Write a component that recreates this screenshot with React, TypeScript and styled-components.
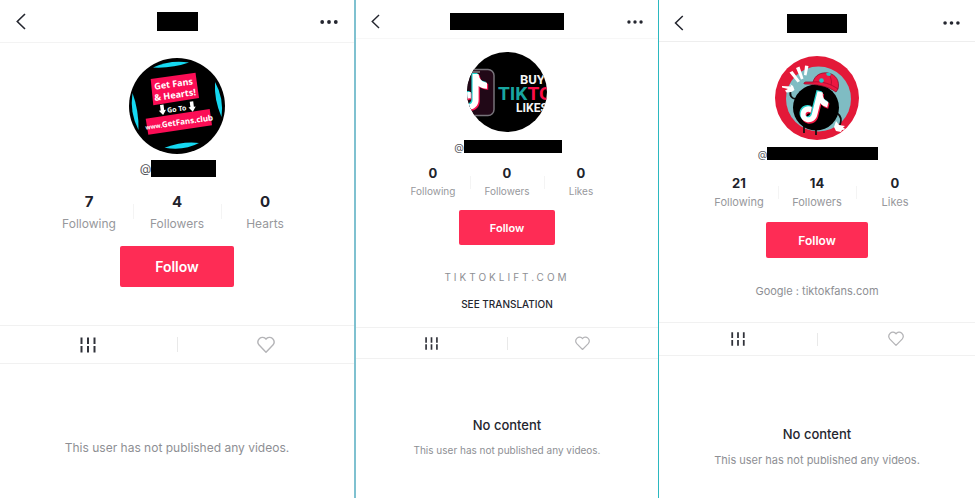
import React from 'react';
import styled, { createGlobalStyle, ThemeProvider } from 'styled-components';

const GlobalStyle = createGlobalStyle`
  *, *::before, *::after { box-sizing: border-box; }
  body { margin: 0; background: #fff; font-family: Inter, "Liberation Sans", sans-serif; }
  button { font: inherit; border: 0; padding: 0; background: none; cursor: pointer; }
  h1, h2, p, dl, dd, dt { margin: 0; font-weight: inherit; }
  svg { display: block; }
`;

const scales = {
  large: {
    bar: 43, barTop: 1, barPad: 16, titleW: 41, titleH: 19, chevron: 17, dots: 18,
    avatar: 96, avatarTop: 15, handleTop: 6, handleH: 17, handleW: 65, handleFont: 12,
    statsTop: 15, statW: 88, num: 15, numLine: 20, label: 12, labelLine: 16, labelTop: 4, rule: 15,
    buttonTop: 14, buttonW: 114, buttonH: 41, buttonFont: 14,
    bioTop: 0, tabsTop: 38, tabsH: 39, icon: 18, emptyTop: 76, title: 13, message: 12, messageTop: 0, barLine: '#f3f3f3',
  },
  small: {
    bar: 39, barTop: 5, barPad: 15, titleW: 114, titleH: 17, chevron: 15, dots: 16,
    avatar: 80, avatarTop: 13, handleTop: 8, handleH: 13, handleW: 98, handleFont: 10,
    statsTop: 11, statW: 74, num: 13, numLine: 18, label: 10, labelLine: 14, labelTop: 2, rule: 13,
    buttonTop: 12, buttonW: 96, buttonH: 35, buttonFont: 11,
    bioTop: 24, tabsTop: 15, tabsH: 32, icon: 15, emptyTop: 57, title: 13, message: 10, messageTop: 9, barLine: '#f7f7f7',
  },
  medium: {
    bar: 42, barTop: 5, barPad: 15, titleW: 60, titleH: 19, chevron: 16, dots: 17,
    avatar: 84, avatarTop: 14, handleTop: 7, handleH: 13, handleW: 111, handleFont: 10,
    statsTop: 14, statW: 78, num: 13, numLine: 18, label: 11, labelLine: 14, labelTop: 3, rule: 13,
    buttonTop: 13, buttonW: 102, buttonH: 36, buttonFont: 12,
    bioTop: 25, tabsTop: 23, tabsH: 34, icon: 16, emptyTop: 69, title: 13, message: 11, messageTop: 10, barLine: '#eeeeee',
  },
};

const Board = styled.main`
  display: grid;
  grid-template-columns: minmax(0, 356fr) minmax(0, 303fr) minmax(0, 316fr);
  min-height: 100vh;
`;

const Panel = styled.section<{ $edge?: string }>`
  border-right: ${p => p.$edge || '0'};
  background: #fff;
`;

const TopBar = styled.header`
  display: grid;
  grid-template-columns: 1fr auto 1fr;
  align-items: center;
  height: ${p => p.theme.bar}px;
  padding: ${p => p.theme.barTop}px ${p => p.theme.barPad}px 0;
  border-bottom: 1px solid ${p => p.theme.barLine};
`;

const BarButton = styled.button<{ $end?: boolean }>`
  justify-self: ${p => (p.$end ? 'end' : 'start')};
  color: #24262f;
`;

const NameMask = styled.h1`
  width: ${p => p.theme.titleW}px;
  height: ${p => p.theme.titleH}px;
  background: #000;
`;

const Profile = styled.div`
  display: flex;
  flex-direction: column;
  align-items: center;
  padding: ${p => p.theme.avatarTop}px 0 ${p => p.theme.tabsTop}px;
`;

const Avatar = styled.svg`
  width: ${p => p.theme.avatar}px;
  height: ${p => p.theme.avatar}px;
  border-radius: 50%;
`;

const Handle = styled.p`
  display: flex;
  align-items: center;
  height: ${p => p.theme.handleH}px;
  margin-top: ${p => p.theme.handleTop}px;
  padding-left: 2px;
  font-size: ${p => p.theme.handleFont}px;
  color: #55565c;
`;

const HandleMask = styled.span`
  width: ${p => p.theme.handleW}px;
  height: 100%;
  background: #000;
`;

const Stats = styled.dl`
  display: flex;
  margin-top: ${p => p.theme.statsTop}px;
`;

const Stat = styled.div`
  position: relative;
  display: flex;
  flex-direction: column-reverse;
  gap: ${p => p.theme.labelTop}px;
  width: ${p => p.theme.statW}px;
  text-align: center;

  & + &::before {
    content: '';
    position: absolute;
    left: 0;
    top: 12px;
    width: 1px;
    height: ${p => p.theme.rule}px;
    background: #f4f4f4;
  }
`;

const StatLabel = styled.dt`
  font-size: ${p => p.theme.label}px;
  line-height: ${p => p.theme.labelLine}px;
  color: #97989c;
`;

const StatValue = styled.dd`
  font-size: ${p => p.theme.num}px;
  line-height: ${p => p.theme.numLine}px;
  font-weight: 700;
  color: #20222b;
`;

const FollowButton = styled.button`
  && {
    width: ${p => p.theme.buttonW}px;
    height: ${p => p.theme.buttonH}px;
    margin-top: ${p => p.theme.buttonTop}px;
    border-radius: 2px;
    background: #fe2c55;
    color: #fff;
    font-size: ${p => p.theme.buttonFont}px;
    font-weight: 600;
  }
`;

const Bio = styled.p<{ $spaced?: boolean }>`
  margin-top: ${p => p.theme.bioTop}px;
  font-size: ${p => p.theme.label}px;
  line-height: 16px;
  letter-spacing: ${p => (p.$spaced ? '3px' : 'normal')};
  color: #8e8f94;
`;

const TranslateButton = styled.button`
  && {
    margin-top: 11px;
    font-size: 10px;
    font-weight: 500;
    line-height: 16px;
    color: #24262f;
  }
`;

const Tabs = styled.nav`
  display: grid;
  grid-template-columns: 1fr 1px 1fr;
  align-items: center;
  height: ${p => p.theme.tabsH}px;
  border: solid #f1f1f1;
  border-width: 1px 0;
`;

const Tab = styled.button<{ $active?: boolean }>`
  display: grid;
  place-items: center;
  height: 100%;
  color: ${p => (p.$active ? '#30323a' : '#b4b4b7')};
`;

const TabRule = styled.span`
  height: ${p => p.theme.rule}px;
  background: #e9e9e9;
`;

const Empty = styled.div`
  padding-top: ${p => p.theme.emptyTop}px;
  text-align: center;
`;

const EmptyTitle = styled.h2`
  font-size: ${p => p.theme.title}px;
  font-weight: 500;
  line-height: 18px;
  color: #24262f;
`;

const EmptyText = styled.p`
  margin-top: ${p => p.theme.messageTop}px;
  font-size: ${p => p.theme.message}px;
  line-height: ${p => p.theme.labelLine}px;
  color: #8e8f94;
`;

const BackIcon = ({ size }: { size: number }) => (
  <svg width={Math.round(size * 0.6)} height={size} viewBox="0 0 10 17" fill="none" stroke="currentColor" strokeWidth="1.6">
    <path d="M9 1 1.3 8.5 9 16" />
  </svg>
);

const MoreIcon = ({ size }: { size: number }) => (
  <svg width={size} height="6" viewBox="0 0 18 6" fill="currentColor">
    <circle cx="2.2" cy="3" r="1.9" />
    <circle cx="9" cy="3" r="1.9" />
    <circle cx="15.8" cy="3" r="1.9" />
  </svg>
);

const GridIcon = ({ size }: { size: number }) => (
  <svg width={size} height={size} viewBox="0 0 18 18" stroke="currentColor" strokeWidth="2">
    <path d="M2.500 1.500v6.500M9 1.500v6.500M15.500 1.500v6.500M2.500 10v6.500M9 10v6.500M15.500 10v6.500" />
  </svg>
);

const HeartIcon = ({ size }: { size: number }) => (
  <svg width={size} height={size} viewBox="0 0 18 18" fill="none" stroke="currentColor" strokeWidth="1.4" strokeLinejoin="round">
    <path d="M9 3.2C7.500 1 4.400.8 2.500 2.600.6 4.400.5 7.100 2.100 9.100L9 16.200l6.900-7.100c1.600-2 1.500-4.700-.4-6.500C13.600.8 10.500 1 9 3.200Z" />
  </svg>
);

const notePath = 'M8 0h5c.4 4.200 2.600 6.800 7 7.200v5c-2.800 0-5-.9-7-2.300v11.500c0 9-11.500 11-14.500 4-2.300-6 2-11 8-10.400v5.300c-3-.7-4.800 1.300-3.700 3.600 1.400 2.500 5.200 1.300 5.200-2.500Z';

const FansAvatar = () => (
  <Avatar viewBox="0 0 96 96" role="img" aria-label="Get Fans">
    <rect width="96" height="96" fill="#000" />
    <g fill="#16d9f2">
      <path d="M24 9.500Q41 1.500 60 4.500 43 10.500 24 9.500Z" />
      <path d="M35.500 89.700Q54 83 70 85 55 93 35.500 89.700Z" />
      <path d="M3.500 35Q10 53 9.500 72 .5 55 3.500 35Z" />
      <path d="M86 24Q95 40 92.500 59 85 42 86 24Z" />
    </g>
    <g fill="#fb0d55">
      <path d="M21.700 21 66.500 14.700 70 40 24.300 47.200Z" />
      <path d="M16.700 60.700 80.700 51 83 67.300 19.300 76.700Z" />
    </g>
    <g fill="#fff" fontFamily='"Noto Sans", sans-serif' fontWeight="700" textAnchor="middle">
      <text fontSize="9" transform="translate(45 29) rotate(-8)">Get Fans</text>
      <text fontSize="9" transform="translate(46.500 40) rotate(-8)">&amp; Hearts!</text>
      <text fontSize="7" transform="translate(48 53.500) rotate(-8)">Go To</text>
      <text fontSize="8" transform="translate(50.500 67) rotate(-8)"><tspan fontSize="6">www.</tspan>GetFans.club</text>
    </g>
    <g fill="#fff">
      <path d="m31 47 3.500-.5.700 5.500 1.800-.3-2.900 5.300-4.300-4.300 1.900-.3Z" />
      <path d="m60.700 43.700 3.500-.5.700 5.500 1.800-.3-2.900 5.300-4.300-4.300 1.900-.3Z" />
    </g>
  </Avatar>
);

const LiftAvatar = () => (
  <Avatar viewBox="0 0 80 80" role="img" aria-label="Buy TikTok Likes">
    <rect width="80" height="80" fill="#000" />
    <rect x="-20" y="17.500" width="47" height="46" rx="6" fill="#210817" stroke="#77737a" strokeWidth="1.500" />
    <path d="M5 20h8" stroke="#bbb" strokeWidth="1" />
    <g transform="translate(-4 22)">
      <path d={notePath} transform="translate(1.200 1.200) scale(1.200)" fill="#fb1551" />
      <path d={notePath} transform="translate(-1.200 -1) scale(1.200)" fill="#20d5d2" />
      <path d={notePath} transform="scale(1.200)" fill="#fff" />
    </g>
    <g fontFamily="Roboto, sans-serif" fontWeight="700">
      <text x="53" y="32" fontSize="13" fill="#f5f5f5">BUY</text>
      <text x="31" y="48" fontSize="19" fill="#18a6a0">TIK<tspan fill="#fb0d48">TO</tspan></text>
      <text x="49" y="60" fontSize="12" fill="#f5f5f5">LIKES</text>
    </g>
  </Avatar>
);

const MascotAvatar = () => (
  <Avatar viewBox="0 0 84 84" role="img" aria-label="Music note mascot with a cap">
    <rect width="84" height="84" fill="#e31938" />
    <circle cx="43.500" cy="43" r="32.500" fill="#7fbcc3" />
    <path d="M22 43c-6 0-8-4-6-9M62 57c4 3 5 7 3 12M29 70v7M41 72v7" fill="none" stroke="#111" strokeWidth="1.800" />
    <circle cx="41" cy="51.500" r="23" fill="#000" />
    <g fill="#fff">
      <path d="M14.500 16.500 17.500 15 25 25l-2.500 1.500ZM21 12l3.500-1.500 4 12-2.500 1ZM30 9.500l3.500.5-2 9.500-2.500-.5Z" />
      <path d="m7 30 9 .5-1-2.500 3 2 1.500 4-3 2-5 .5-1.500-2 3-1.500-6-1.500Z" />
      <path d="m61 65 3 4 6 1-2 1.500 3 2-4 .5-1 2-5-1-2-4Z" />
    </g>
    <path d="M38 26c2-7 8-10 15-9 8 1.500 12 8 10 16l-2 3c-8-6-20-8-31-8-2 0-1-2 1-2Z" fill="#ed1741" stroke="#8e102b" strokeWidth=".8" />
    <path d="M38 26c9-1 18 2 25 7M53 17c3 4 4 8 3 12" fill="none" stroke="#a20d2f" strokeWidth=".8" />
    <circle cx="46.500" cy="24.500" r="2.300" fill="#27c6c8" />
    <path d="m51 17.500 3-1 2 1.500-1 2-3-.5Z" fill="#27c6c8" />
    <g transform="translate(30 36) rotate(14 14 15) scale(1.100)">
      <path d={notePath} transform="translate(1.200 1)" fill="#ed1741" />
      <path d={notePath} transform="translate(-1.200 -.8)" fill="#29d2ce" />
      <path d={notePath} fill="#fff" />
    </g>
  </Avatar>
);

type Scale = keyof typeof scales;

interface ProfileData {
  scale: Scale;
  edge?: string;
  avatar: React.ReactNode;
  stats: [string, string][];
  bio?: string;
  spacedBio?: boolean;
  translate?: boolean;
  emptyTitle?: string;
}

const profiles: ProfileData[] = [
  { scale: 'large', edge: '2px solid #7fc1d0', avatar: <FansAvatar />, stats: [['Following', '7'], ['Followers', '4'], ['Hearts', '0']] },
  { scale: 'small', edge: '1px solid #2bb8c0', avatar: <LiftAvatar />, stats: [['Following', '0'], ['Followers', '0'], ['Likes', '0']], bio: 'TIKTOKLIFT.COM', spacedBio: true, translate: true, emptyTitle: 'No content' },
  { scale: 'medium', avatar: <MascotAvatar />, stats: [['Following', '21'], ['Followers', '14'], ['Likes', '0']], bio: 'Google : tiktokfans.com', emptyTitle: 'No content' },
];

const ProfilePanel = ({ scale, edge, avatar, stats, bio, spacedBio, translate, emptyTitle }: ProfileData) => {
  const s = scales[scale];
  return (
    <ThemeProvider theme={s}>
      <Panel $edge={edge}>
        <TopBar>
          <BarButton aria-label="Back"><BackIcon size={s.chevron} /></BarButton>
          <NameMask aria-label="Hidden name" />
          <BarButton $end aria-label="More"><MoreIcon size={s.dots} /></BarButton>
        </TopBar>
        <Profile>
          {avatar}
          <Handle>@<HandleMask /></Handle>
          <Stats>
            {stats.map(([label, value]) => (
              <Stat key={label}>
                <StatLabel>{label}</StatLabel>
                <StatValue>{value}</StatValue>
              </Stat>
            ))}
          </Stats>
          <FollowButton>Follow</FollowButton>
          {bio && <Bio $spaced={spacedBio}>{bio}</Bio>}
          {translate && <TranslateButton>SEE TRANSLATION</TranslateButton>}
        </Profile>
        <Tabs>
          <Tab $active aria-label="Videos"><GridIcon size={s.icon} /></Tab>
          <TabRule />
          <Tab aria-label="Liked"><HeartIcon size={s.icon} /></Tab>
        </Tabs>
        <Empty>
          {emptyTitle && <EmptyTitle>{emptyTitle}</EmptyTitle>}
          <EmptyText>This user has not published any videos.</EmptyText>
        </Empty>
      </Panel>
    </ThemeProvider>
  );
};

export default function App() {
  return (
    <>
      <GlobalStyle />
      <Board>
        {profiles.map(p => <ProfilePanel key={p.scale} {...p} />)}
      </Board>
    </>
  );
}
